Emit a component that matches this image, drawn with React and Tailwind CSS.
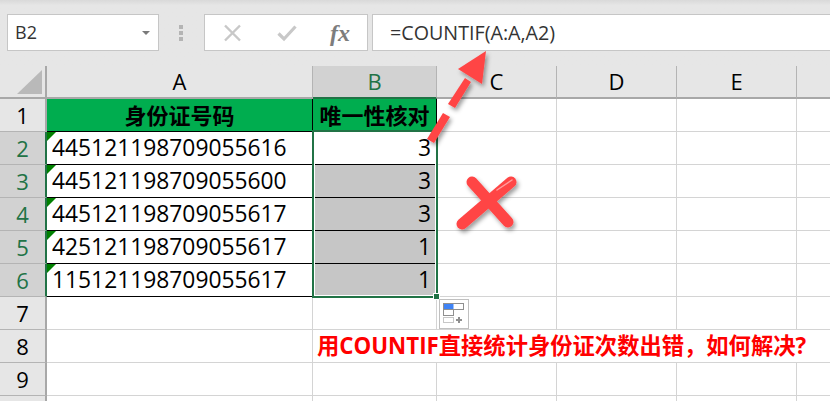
import React from 'react';

const FONT = "font-['Open_Sans','Noto_Sans_CJK_SC',sans-serif]";

const ids = [
  ['445121198709055616', '3'],
  ['445121198709055600', '3'],
  ['445121198709055617', '3'],
  ['425121198709055617', '1'],
  ['115121198709055617', '1'],
];

const letters = ['C', 'D', 'E'];

const ColHeader = ({ label, active, className = '' }) => (
  <div
    className={`flex items-center justify-center border-b-2 border-r border-r-[#b4b4b4] pb-[1px] text-[22px] ${
      active ? 'bg-[#d2d2d2] border-b-[#217346] text-[#217346]' : 'bg-[#e6e6e6] border-b-[#a8a8a8] text-black'
    } ${className}`}
  >
    {label}
  </div>
);

const RowHeader = ({ n, active }) => (
  <div
    className={`flex items-center justify-center border-b border-b-[#b4b4b4] border-r-2 text-[22px] ${
      active ? 'bg-[#d2d2d2] border-r-[#217346] text-[#217346]' : 'bg-[#e6e6e6] border-r-[#a8a8a8] text-black'
    }`}
  >
    {n}
  </div>
);

const Blank = ({ className = '' }) => <div className={`border-b border-r border-[#d4d4d4] bg-white ${className}`} />;

const BlankRow = ({ n }) => (
  <>
    <RowHeader n={n} />
    <Blank />
    <Blank />
    <Blank />
    <Blank />
    <Blank />
    <Blank className="border-r-0" />
  </>
);

const Overlay = () => (
  <svg className="absolute left-0 top-0 pointer-events-none" width="830" height="401" viewBox="0 0 830 401">
    <defs>
      <filter id="shadow" x="-30%" y="-30%" width="160%" height="160%">
        <feDropShadow dx="2" dy="3" stdDeviation="2.2" floodColor="#000" floodOpacity="0.38" />
      </filter>
    </defs>
    {/* dashed arrow */}
    <g fill="#ff4545" filter="url(#shadow)">
      <polygon points="486,51 458,69 482,84" />
      <polygon points="465,78 471,82 455,108 448,104" />
      <polygon points="443,113 450,117 434,143 427,139" />
    </g>
    {/* cross */}
    <g filter="url(#shadow)" stroke="#ff4545" strokeWidth="11" strokeLinecap="round" fill="none">
      <line x1="472" y1="182" x2="508" y2="222" />
      <line x1="511" y1="182" x2="462" y2="224" />
    </g>
    <line x1="497" y1="190" x2="512" y2="180" stroke="#ff9c9c" strokeWidth="1.5" strokeLinecap="round" />
  </svg>
);

const PasteOptions = () => (
  <div className="absolute left-[439px] top-[299px] flex h-[30px] w-[30px] items-center justify-center border border-[#c0c0c0] bg-white">
    <svg width="24" height="24" viewBox="0 0 24 24">
      <rect x="1.5" y="1.5" width="10" height="6" fill="#3f83f5" />
      <rect x="1.5" y="1.5" width="20" height="6" fill="none" stroke="#8f8f8f" />
      <rect x="1.5" y="7.5" width="10" height="6" fill="#fff" stroke="#8f8f8f" />
      <rect x="1.5" y="15.5" width="10" height="5" fill="none" stroke="#8f8f8f" strokeDasharray="1 1" />
      <path d="M14 18h6M17 15v6" stroke="#8f8f8f" strokeWidth="2" />
    </svg>
  </div>
);

export default function App() {
  return (
    <div className={`relative h-[401px] w-[830px] overflow-hidden bg-[#e6e6e6] ${FONT}`}>
      {/* formula bar */}
      <div className="flex h-[66px] items-start gap-[5px] bg-gradient-to-b from-[#d9d9d9] from-0% to-[#e6e6e6] to-[8%] pl-[7px] pt-[14px]">
        <div className="flex h-[37px] w-[152px] items-center justify-between border border-[#c6c6c6] bg-white pl-[7px] pr-[8px] text-[18px] text-[#333]">
          <span>B2</span>
          <span className="h-0 w-0 border-x-[4px] border-t-[4px] border-x-transparent border-t-[#7a7a7a]" />
        </div>
        <div className="flex h-[37px] w-[35px] flex-col items-center justify-center gap-[2px] pr-[2px]">
          <span className="h-[4px] w-[4px] bg-[#b4b4b4]" />
          <span className="h-[4px] w-[4px] bg-[#b4b4b4]" />
          <span className="h-[4px] w-[4px] bg-[#b4b4b4]" />
        </div>
        <div className="flex h-[37px] w-[164px] items-center border border-[#c6c6c6] bg-white">
          <svg className="ml-[18px]" width="20" height="18" viewBox="0 0 20 18">
            <path d="M2 1.5 17 16.5M17 1.5 2 16.5" stroke="#c8c8c8" strokeWidth="2.4" fill="none" />
          </svg>
          <svg className="ml-[34px]" width="20" height="18" viewBox="0 0 20 18">
            <path d="M1.5 9.5 7 15 18.5 2.5" stroke="#c8c8c8" strokeWidth="3.2" fill="none" />
          </svg>
          <span className="ml-[33px] font-['Liberation_Serif',serif] text-[24px] font-bold italic leading-none text-[#7d7d7d]">fx</span>
        </div>
        <div className="ml-[-1px] flex h-[37px] flex-1 items-center border border-r-0 border-[#c6c6c6] bg-white pl-[17px] text-[19.7px] text-[#333]">
          =COUNTIF(A:A,A2)
        </div>
      </div>

      {/* sheet */}
      <div className="grid grid-cols-[47px_266px_124px_120px_120px_120px_33px] grid-rows-[33px_repeat(10,33px)]">
        <div className="relative border-b-2 border-r-2 border-[#a8a8a8] bg-[#e6e6e6]">
          <span className="absolute bottom-[3px] right-[3px] h-0 w-0 border-b-[24px] border-l-[25px] border-b-[#b9b9b9] border-l-transparent" />
        </div>
        <ColHeader label="A" />
        <ColHeader label="B" active />
        {letters.map((l) => (
          <ColHeader key={l} label={l} />
        ))}
        <ColHeader label="" className="border-r-0" />

        <RowHeader n={1} />
        <div className="flex items-center justify-center border-b border-r border-black bg-[#00ad4f] text-[22px] font-bold text-black">
          身份证号码
        </div>
        <div className="flex items-center justify-center border-b border-r border-black bg-[#00ad4f] text-[22px] font-bold text-black">
          唯一性核对
        </div>
        <Blank />
        <Blank />
        <Blank />
        <Blank className="border-r-0" />

        {ids.map(([id, count], i) => (
          <React.Fragment key={id}>
            <RowHeader n={i + 2} active />
            <div className="relative flex items-center border-b border-r border-black bg-white pl-[5px] text-[22.8px] text-black">
              <span className="absolute left-0 top-0 h-0 w-0 border-r-[9px] border-t-[9px] border-r-transparent border-t-[#008000]" />
              {id}
            </div>
            <div
              className={`flex items-center justify-end border-b border-r border-black pr-[5px] text-[22.8px] text-black ${
                i === 0 ? 'bg-white' : 'bg-[#c6c6c6]'
              }`}
            >
              {count}
            </div>
            <Blank />
            <Blank />
            <Blank />
            <Blank className="border-r-0" />
          </React.Fragment>
        ))}

        <BlankRow n={7} />

        <RowHeader n={8} />
        <Blank />
        <div className="col-span-5 flex items-center whitespace-nowrap border-b border-[#d4d4d4] bg-white pl-[4px] text-[22.3px] font-bold text-[#ff0000]">
          用COUNTIF直接统计身份证次数出错，如何解决?
        </div>

        <BlankRow n={9} />
        <BlankRow n="" />
      </div>

      {/* selection B2:B6 */}
      <div className="absolute left-[312px] top-[130px] h-[168px] w-[126px] border-2 border-[#217346]">
        <div className="h-full w-full border border-white" />
      </div>
      <div className="absolute left-[433px] top-[293px] h-[7px] w-[7px] border border-white bg-[#217346]" />
      <PasteOptions />
      <Overlay />
    </div>
  );
}
